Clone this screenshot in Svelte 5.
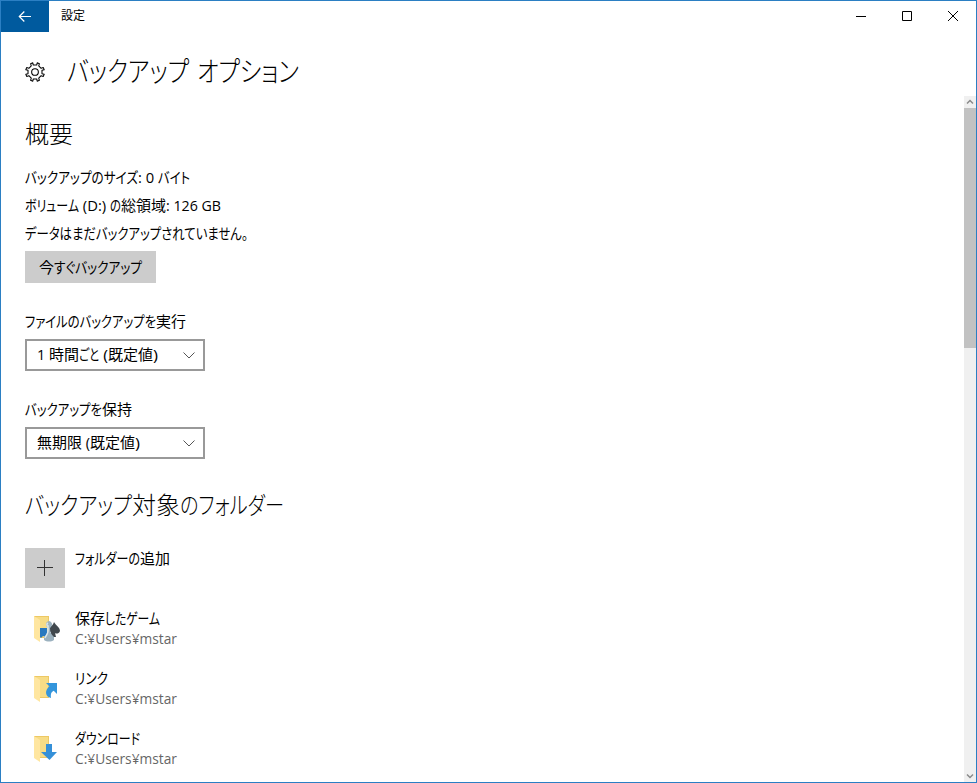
<script lang="ts">
  // a run of text and the width it should take up
  type Run = [string, number?];
  type Folder = { name: Run[]; path: string; icon: 'game' | 'link' | 'download' };

  const summary: Run[][] = [
    [['バックアップのサイズ', 113], [': 0 ', 20], ['バイト', 32]],
    [['ボリューム', 54], [' (D:) ', 31], ['の', 11], ['総領域', 45], [': 126 GB', 55]],
    [['データはまだバックアップされていません。', 223]],
  ];

  const selects: { label: Run[]; value: Run[] }[] = [
    {
      label: [['ファイルのバックアップを', 131], ['実行', 30]],
      value: [['1 ', 12], ['時間', 30], ['ごと', 20], [' (', 9], ['既定値', 45], [')', 5]],
    },
    {
      label: [['バックアップを', 77], ['保持', 30]],
      value: [['無期限', 45], [' (', 8], ['既定値', 45], [')', 5]],
    },
  ];

  const folders: Folder[] = [
    { name: [['保存', 30], ['したゲーム', 55]], path: 'C:¥Users¥mstar', icon: 'game' },
    { name: [['リンク', 33]], path: 'C:¥Users¥mstar', icon: 'link' },
    { name: [['ダウンロード', 65]], path: 'C:¥Users¥mstar', icon: 'download' },
  ];

  function fit(node: HTMLElement, width?: number) {
    if (!width) return;
    const natural = node.getBoundingClientRect().width;
    node.style.transform = `scaleX(${width / natural})`;
    node.style.marginRight = `${width - natural}px`;
  }
</script>

{#snippet line(runs: Run[])}{#each runs as [text, width]}<span class="run" use:fit={width}>{text}</span>{/each}{/snippet}

<div class="window">
  <header class="titlebar">
    <button class="back" aria-label="戻る">
      <svg width="14" height="12" viewBox="0 0 14 12"><path d="M13 5.500H1.500M6.300.5l-5 5 5 5" /></svg>
    </button>
    <span class="app-name">設定</span>
    <div class="controls">
      <svg width="46" height="31" viewBox="0 0 46 31"><path d="M18 15.500h10" /></svg>
      <svg width="46" height="31" viewBox="0 0 46 31"><path d="M18.500 10.500h9v9h-9z" /></svg>
      <svg width="46" height="31" viewBox="0 0 46 31"><path d="m18 10 10 10M28 10 18 20" /></svg>
    </div>
  </header>

  <div class="page-title">
    <svg class="gear" width="22" height="22" viewBox="-11.5 -11.5 23 23">
      <path d="M-1.8-7.3-2.300-9.600-4.600-8.700-3.900-6.400-6.400-3.900-8.700-4.600-9.600-2.300-7.300-1.800V1.800L-9.600 2.300-8.700 4.600-6.400 3.900-3.900 6.400-4.600 8.700-2.300 9.600-1.800 7.300H1.800L2.300 9.600 4.600 8.700 3.900 6.400 6.400 3.900 8.700 4.600 9.600 2.300 7.300 1.800V-1.800L9.600-2.300 8.700-4.600 6.400-3.900 3.900-6.400 4.600-8.700 2.300-9.600 1.800-7.300Z" />
      <circle r="3.500" />
    </svg>
    <h1>{@render line([['バックアップ', 122], [' ', 8], ['オプション', 102]])}</h1>
  </div>

  <div class="body">
    <main>
      <h2>{@render line([['概要', 48]])}</h2>
      {#each summary as runs}
        <p>{@render line(runs)}</p>
      {/each}
      <button class="backup">{@render line([['今', 15], ['すぐバックアップ', 88]])}</button>

      {#each selects as s}
        <div class="field">
          <div class="label">{@render line(s.label)}</div>
          <div class="select">
            <span>{@render line(s.value)}</span>
            <svg width="12" height="7" viewBox="0 0 12 7"><path d="m.5.5 5.500 5.500L11.500.5" /></svg>
          </div>
        </div>
      {/each}

      <h2 class="folders-title">{@render line([['バックアップ', 107], ['対象', 48], ['のフォルダー', 104]])}</h2>

      <div class="add">
        <button aria-label="追加">
          <svg width="16" height="16" viewBox="0 0 16 16"><path d="M0 7.500h16M7.500 0v16" /></svg>
        </button>
        <span>{@render line([['フォルダーの', 65], ['追加', 30]])}</span>
      </div>

      {#each folders as f}
        <div class="folder">
          <svg class="folder-icon" width="28" height="28" viewBox="0 0 28 28">
            <path d="M1 1h15v22H6L1 22z" fill="#edc864" />
            <path d="M3 2h12v20H6z" fill="#f7dc86" />
            <path d="m1 1 6 4v22l-6-4z" fill="#ffe6a0" />
            {#if f.icon === 'game'}
              <path d="M7 13h7v9l-4-1-2 2-1-1z" fill="#2878bf" />
              <path d="M21 7c2 4 6 5 6 9-1 3-4 3-5 2l1 4h-6l1-5c-2 0-3-2-2-4 1-2 4-2 5-6z" fill="#41484e" />
              <path d="M16 6a3.500 3.500 0 0 1 2 6l-1 1c0 4 1 6 4 9v3c-3 2-7 2-10 0v-3c3-3 4-5 4-9l-1-1a3.500 3.500 0 0 1 2-6z" fill="#9bb1bf" />
              <path d="M15 8c-2 1-1 3 0 3v5c0 3-2 4-3 7" fill="none" stroke="#dce6ec" stroke-width="1.500" />
            {:else if f.icon === 'link'}
              <path d="M13 8h11v11l-3.300-3.300c-2.500 1.500-3.200 3-2.700 7.300-6-1.500-6.500-7-1.700-11.700z" fill="#3395dc" />
            {:else}
              <path d="M13 9h6v8h5l-7.500 8L8 17h5z" fill="#3590d8" />
            {/if}
          </svg>
          <div class="info">
            <div class="name">{@render line(f.name)}</div>
            <div class="path">{@render line([[f.path, 102]])}</div>
          </div>
        </div>
      {/each}
    </main>

    <div class="scrollbar">
      <svg width="12" height="12" viewBox="0 0 12 12"><path d="M3 7.500 6 4.500 9 7.500" /></svg>
      <div class="thumb"></div>
      <svg class="down" width="12" height="12" viewBox="0 0 12 12"><path d="m3 4.500 3 3 3-3" /></svg>
    </div>
  </div>
</div>

<style>
  :global(body) {
    margin: 0;
    overflow: hidden;
  }

  .window {
    box-sizing: border-box;
    width: 977px;
    height: 783px;
    display: flex;
    flex-direction: column;
    border: 1px solid #2b7fc3;
    background: #fff;
    color: #000;
    font-family: 'Open Sans', 'Noto Sans CJK JP', sans-serif;
    font-size: 15px;
    overflow: hidden;
  }

  .run {
    display: inline-block;
    white-space: pre;
    transform-origin: 0 50%;
    font-feature-settings: 'palt';
  }

  svg {
    display: block;
    fill: none;
    stroke: #000;
    flex: none;
  }

  button {
    border: 0;
    padding: 0;
    font: inherit;
    color: inherit;
    background: #ccc;
  }

  .titlebar {
    display: flex;
    height: 31px;
    flex: none;
  }

  .back {
    width: 48px;
    display: flex;
    align-items: center;
    justify-content: center;
    background: #005a9e;
  }

  .back svg {
    stroke: #fff;
    stroke-width: 1.2;
  }

  .app-name {
    margin-left: 12px;
    font-size: 12px;
    line-height: 30px;
  }

  .controls {
    display: flex;
    margin-left: auto;
  }

  .page-title {
    display: flex;
    align-items: center;
    height: 64px;
    flex: none;
    padding: 0 0 0 23px;
    box-sizing: border-box;
  }

  .gear {
    margin: 16px 21px 0 0;
    stroke-width: 1.1;
    stroke-linejoin: round;
  }

  h1,
  h2 {
    margin: 0;
    font-weight: 300;
    white-space: nowrap;
  }

  h1 {
    padding-top: 14px;
    font-size: 28px;
    line-height: 40px;
  }

  h2 {
    font-size: 24px;
    line-height: 36px;
  }

  .body {
    display: flex;
    flex: 1;
    min-height: 0;
  }

  main {
    flex: 1;
    padding: 20px 0 0 24px;
    overflow: hidden;
  }

  p {
    margin: 0;
    height: 28px;
    line-height: 28px;
  }

  main h2 {
    margin-bottom: 11px;
    height: 36px;
  }

  .backup {
    display: block;
    width: 131px;
    height: 32px;
    margin-top: 4px;
    line-height: 32px;
  }

  .field {
    margin-top: 28px;
  }

  .label {
    height: 28px;
    line-height: 21px;
  }

  .select {
    box-sizing: border-box;
    width: 180px;
    height: 32px;
    display: flex;
    align-items: center;
    justify-content: space-between;
    padding: 0 8px 0 10px;
    border: 2px solid #999;
    line-height: 26px;
  }

  .select > span {
    height: 28px;
  }

  .select svg {
    stroke: #555;
  }

  main .folders-title {
    margin: 28px 0 25px;
    line-height: 35px;
  }

  .add {
    display: flex;
    height: 40px;
    line-height: 21px;
  }

  .add button {
    width: 40px;
    margin-right: 10px;
    display: flex;
    align-items: center;
    justify-content: center;
  }

  .add svg {
    stroke: #333;
  }

  .folder {
    display: flex;
    height: 40px;
    margin-top: 20px;
    line-height: 20px;
  }

  .folder-icon {
    margin: 7px 14px 0 8px;
    stroke: none;
  }

  .name,
  .path {
    height: 20px;
  }

  .path {
    color: #666;
  }

  .scrollbar {
    width: 12px;
    display: flex;
    flex-direction: column;
    background: #f0f0f0;
  }

  .scrollbar svg {
    stroke: #8a8a8a;
    stroke-width: 1.5;
  }

  .thumb {
    height: 240px;
    background: #c2c2c2;
  }

  .down {
    margin-top: auto;
  }
</style>
